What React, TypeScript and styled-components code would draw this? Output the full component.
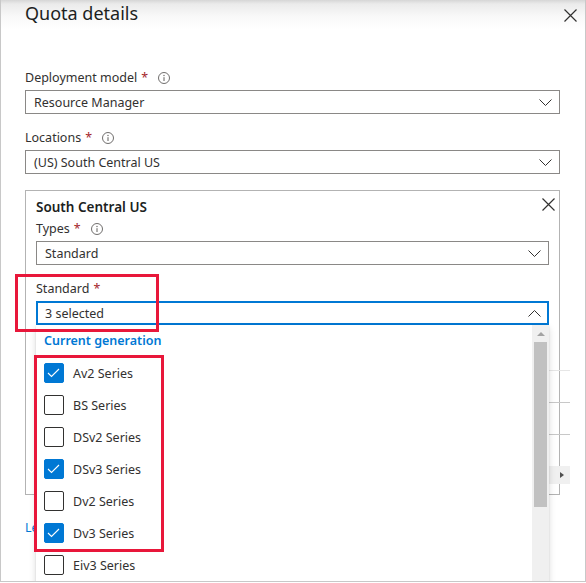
import styled, { createGlobalStyle } from 'styled-components';

const GlobalStyle = createGlobalStyle`
  * { box-sizing: border-box; }
  html, body { margin: 0; padding: 0; background: #fff; }
  body {
    font-family: "Noto Sans", "Open Sans", sans-serif;
    color: #323130;
  }
`;

const Frame = styled.div`
  position: relative;
  width: 586px;
  height: 582px;
  border: 1px solid #c8c8c8;
  border-top: none;
  overflow: hidden;
  background: #fff;
`;

const Header = styled.header`
  position: relative;
  height: 44px;
  padding: 1px 24px 0;
  background: linear-gradient(180deg, #d6d6d6 0, #ebebeb 4px, #f8f8f8 16px, #fff 30px);
`;

const Title = styled.h1`
  margin: 0;
  font-size: 18px;
  line-height: 24px;
  font-weight: 400;
  color: #201f1e;
`;

const CloseButton = styled.span<{ $top: number; $right: number }>`
  position: absolute;
  top: ${(p) => p.$top}px;
  right: ${(p) => p.$right}px;
  display: flex;
  width: 13px;
  height: 13px;
`;

const Body = styled.div`
  padding: 24px 25px 0 24px;
`;

const Field = styled.div<{ $gap: number }>`
  position: relative;
  margin-bottom: ${(p) => p.$gap}px;
`;

const Label = styled.div`
  display: flex;
  align-items: center;
  height: 20px;
  margin-bottom: 2px;
  font-size: 12.5px;
  line-height: 20px;
  color: #323130;
`;

const Required = styled.span`
  color: #a4262c;
  padding-left: 4px;
`;

const InfoIcon = styled.svg`
  margin-left: 10px;
  flex: none;
`;

const Select = styled.div<{ $open?: boolean }>`
  display: flex;
  align-items: center;
  justify-content: space-between;
  height: 24px;
  border: ${(p) => (p.$open ? '2px solid #0078d4' : '1px solid #8a8886')};
  padding: ${(p) => (p.$open ? '0 6px 0 7px' : '0 7px 0 8px')};
  font-size: 12.5px;
  color: #323130;
  background: #fff;
`;

const Panel = styled.section`
  position: relative;
  border: 1px solid #b3b3b3;
  padding: 6px 10px 10px;
`;

const PanelTitle = styled.h2`
  margin: 0 0 2px;
  font-size: 13.5px;
  line-height: 20px;
  font-weight: 600;
  color: #201f1e;
`;

const Table = styled.div`
  margin: 14px -21px 0 0;
`;

const TableRow = styled.div<{ $head?: boolean; $last?: boolean }>`
  height: ${(p) => (p.$last ? 31 : 32)}px;
  border-bottom: ${(p) => (p.$last ? 'none' : p.$head ? '1px solid #e6e6e6' : '1px solid #c8c8c8')};
`;

const HScroll = styled.div`
  display: flex;
  justify-content: flex-end;
  height: 18px;
  background: #f0f0f0;
`;

const HScrollButton = styled.div`
  display: flex;
  align-items: center;
  justify-content: center;
  width: 17px;
  height: 18px;
`;

const RightArrow = styled.div`
  width: 0;
  height: 0;
  border-top: 3.5px solid transparent;
  border-bottom: 3.5px solid transparent;
  border-left: 4px solid #505050;
`;

const LinkText = styled.a`
  display: block;
  margin-top: 23px;
  font-size: 12.5px;
  line-height: 20px;
  color: #0078d4;
  text-decoration: none;
`;

const Popup = styled.div`
  position: absolute;
  z-index: 5;
  top: 100%;
  left: 0;
  right: 0;
  height: 420px;
  padding-right: 17px;
  background: #fff;
  box-shadow: 0 3px 7px rgba(0, 0, 0, 0.14), 0 0.6px 1.8px rgba(0, 0, 0, 0.11);
`;

const GroupHeader = styled.div`
  height: 32px;
  padding-left: 8px;
  font-size: 12.5px;
  line-height: 32px;
  font-weight: 600;
  color: #0078d4;
`;

const Option = styled.div`
  display: flex;
  align-items: center;
  gap: 9px;
  height: 32px;
  padding-left: 8px;
  font-size: 12.5px;
  color: #323130;
`;

const Checkbox = styled.span<{ $checked: boolean }>`
  display: flex;
  flex: none;
  width: 20px;
  height: 20px;
  border-radius: 2px;
  border: 1px solid ${(p) => (p.$checked ? '#0078d4' : '#323130')};
  background: ${(p) => (p.$checked ? '#0078d4' : '#fff')};
`;

const ScrollTrack = styled.div`
  position: absolute;
  top: 0;
  right: 0;
  bottom: 0;
  width: 17px;
  background: #f0f0f0;
`;

const ScrollUp = styled.div`
  display: flex;
  justify-content: center;
  padding-top: 7px;
  height: 17px;

  &::after {
    content: '';
    border-left: 4px solid transparent;
    border-right: 4px solid transparent;
    border-bottom: 4px solid #a3a3a3;
    height: 0;
  }
`;

const ScrollThumb = styled.div`
  margin-left: 2px;
  width: 13px;
  height: 165px;
  background: #c1c1c1;
`;

const Highlight = styled.div<{ $x: number; $y: number; $w: number; $h: number }>`
  position: absolute;
  z-index: 10;
  left: ${(p) => p.$x}px;
  top: ${(p) => p.$y}px;
  width: ${(p) => p.$w}px;
  height: ${(p) => p.$h}px;
  border: 3px solid #e8173a;
  pointer-events: none;
`;

function Chevron({ up }: { up?: boolean }) {
  return (
    <svg width="13" height="7" viewBox="0 0 13 7" style={up ? { transform: 'rotate(180deg)' } : undefined}>
      <path d="M0.5 0.5L6.5 6.5L12.5 0.5" fill="none" stroke="#323130" strokeWidth="1" />
    </svg>
  );
}

function Info() {
  return (
    <InfoIcon width="12" height="12" viewBox="0 0 12 12">
      <circle cx="6" cy="6" r="5.5" fill="none" stroke="#605e5c" strokeWidth="0.9" />
      <path d="M6 5.2V9" stroke="#605e5c" strokeWidth="1" />
      <circle cx="6" cy="3.5" r="0.65" fill="#605e5c" />
    </InfoIcon>
  );
}

function CloseIcon() {
  return (
    <svg width="13" height="13" viewBox="0 0 13 13">
      <path d="M0.5 0.5L12.5 12.5M12.5 0.5L0.5 12.5" stroke="#323130" strokeWidth="1.2" />
    </svg>
  );
}

function CheckMark() {
  return (
    <svg width="18" height="18" viewBox="0 0 18 18">
      <path d="M3 9L6.5 12.5L14 5" fill="none" stroke="#fff" strokeWidth="1.1" />
    </svg>
  );
}

const series = [
  { name: 'Av2 Series', checked: true },
  { name: 'BS Series', checked: false },
  { name: 'DSv2 Series', checked: false },
  { name: 'DSv3 Series', checked: true },
  { name: 'Dv2 Series', checked: false },
  { name: 'Dv3 Series', checked: true },
  { name: 'Eiv3 Series', checked: false },
];

export default function App() {
  return (
    <Frame>
      <GlobalStyle />
      <Header>
        <Title>Quota details</Title>
        <CloseButton $top={9} $right={8}>
          <CloseIcon />
        </CloseButton>
      </Header>

      <Body>
        <Field $gap={14}>
          <Label>
            Deployment model<Required>*</Required>
            <Info />
          </Label>
          <Select>
            Resource Manager
            <Chevron />
          </Select>
        </Field>

        <Field $gap={16}>
          <Label>
            Locations<Required>*</Required>
            <Info />
          </Label>
          <Select>
            (US) South Central US
            <Chevron />
          </Select>
        </Field>

        <Panel>
          <CloseButton $top={7} $right={4}>
            <CloseIcon />
          </CloseButton>
          <PanelTitle>South Central US</PanelTitle>

          <Field $gap={14}>
            <Label>
              Types<Required>*</Required>
              <Info />
            </Label>
            <Select>
              Standard
              <Chevron />
            </Select>
          </Field>

          <Field $gap={0}>
            <Label>
              Standard<Required>*</Required>
            </Label>
            <Select $open>
              3 selected
              <Chevron up />
            </Select>
            <Popup>
              <GroupHeader>Current generation</GroupHeader>
              {series.map((s) => (
                <Option key={s.name}>
                  <Checkbox $checked={s.checked}>{s.checked && <CheckMark />}</Checkbox>
                  {s.name}
                </Option>
              ))}
              <ScrollTrack>
                <ScrollUp />
                <ScrollThumb />
              </ScrollTrack>
            </Popup>
          </Field>

          <Table>
            <TableRow $head />
            <TableRow />
            <TableRow />
            <TableRow $last />
            <HScroll>
              <HScrollButton>
                <RightArrow />
              </HScrollButton>
            </HScroll>
          </Table>
        </Panel>

        <LinkText href="#">Learn more about quotas</LinkText>
      </Body>

      <Highlight $x={14} $y={274} $w={144} $h={58} />
      <Highlight $x={33} $y={355} $w={130} $h={197} />
    </Frame>
  );
}
